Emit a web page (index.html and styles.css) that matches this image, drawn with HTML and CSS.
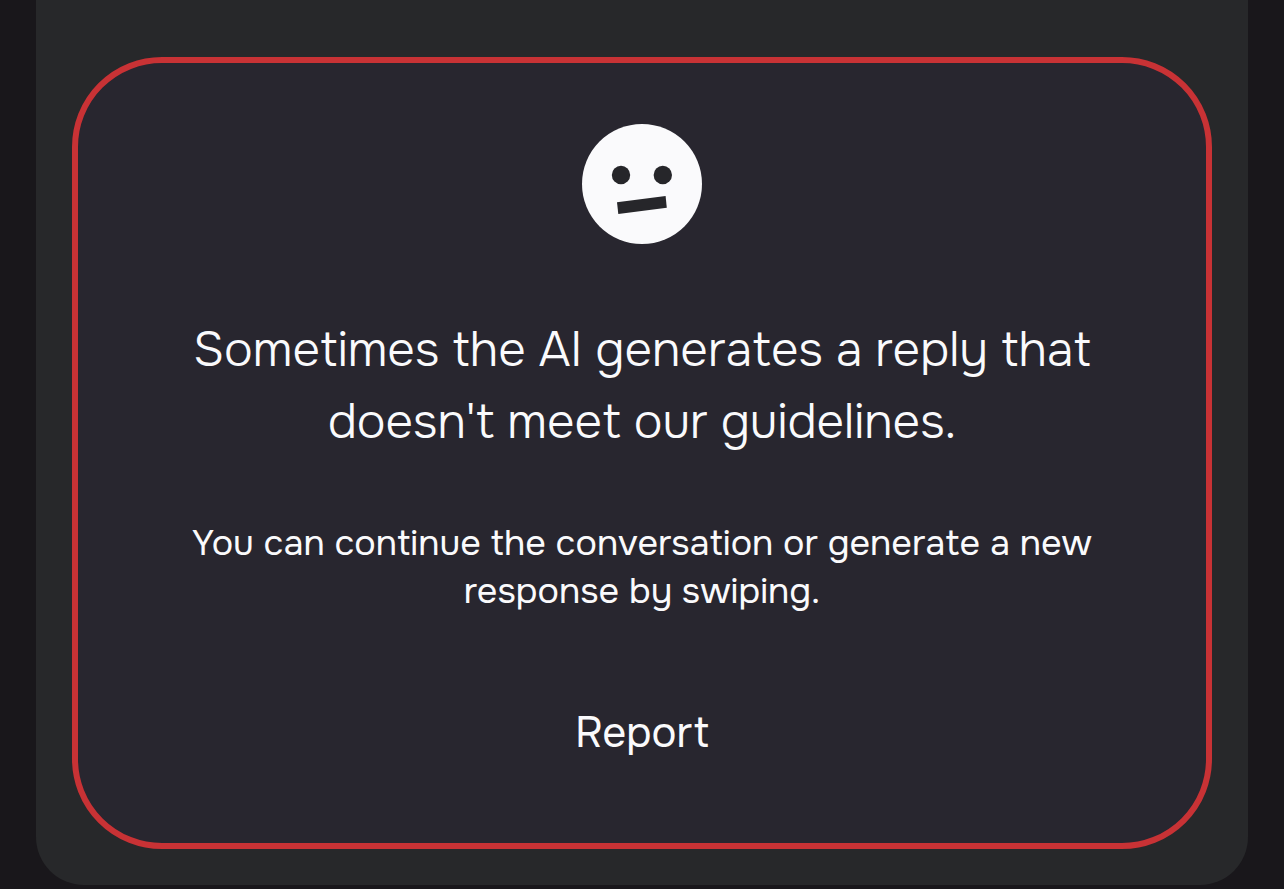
FILE: index.html
```html
<!DOCTYPE html>
<html lang="en">
<head>
  <meta charset="utf-8">
  <meta name="viewport" content="width=device-width, initial-scale=1">
  <title>Reply unavailable</title>
  <link rel="stylesheet" href="styles.css">
</head>
<body>
  <main class="panel">
    <section class="notice" aria-labelledby="notice-title">
      <svg class="face" viewBox="0 0 120 120" aria-hidden="true">
        <circle class="face-head" cx="60" cy="60" r="60"/>
        <circle class="face-mark" cx="39" cy="51" r="9.2"/>
        <circle class="face-mark" cx="80.8" cy="51" r="9.2"/>
        <path class="face-mark" d="M35 78.2 83.6 72 84.8 83.7 36.3 90Z"/>
      </svg>
      <h1 class="title" id="notice-title">Sometimes the AI generates a reply that doesn't meet our guidelines.</h1>
      <p class="detail">You can continue the conversation or generate a new response by swiping.</p>
      <button class="report" type="button">Report</button>
    </section>
  </main>
</body>
</html>
```
FILE: styles.css
```css
* {
  box-sizing: border-box;
}

body {
  margin: 0;
  background: #19171b;
  color: #fafafc;
  font-family: Onest, Inter, "Liberation Sans", sans-serif;
}

.panel {
  margin: 0 36px 4px;
  padding: 57px 36px 36px;
  border-radius: 0 0 48px 48px;
  background: #27282a;
}

.notice {
  display: flex;
  flex-direction: column;
  align-items: center;
  padding: 61px 100px 80px;
  border: 6px solid #c83235;
  border-radius: 90px;
  background: #28262f;
  text-align: center;
}

.face {
  width: 120px;
  height: 120px;
}

.face-head {
  fill: #fafafc;
}

.face-mark {
  fill: #26262a;
}

.title {
  margin: 70px 0 0;
  font-size: 48px;
  font-weight: 300;
  line-height: 72px;
}

.detail {
  margin: 61px 0 0;
  font-size: 36px;
  font-weight: 400;
  line-height: 48px;
}

.report {
  margin: 88px 0 0;
  padding: 0;
  border: 0;
  background: none;
  color: inherit;
  font-family: inherit;
  font-size: 42px;
  font-weight: 400;
  line-height: 60px;
  cursor: pointer;
}
```
